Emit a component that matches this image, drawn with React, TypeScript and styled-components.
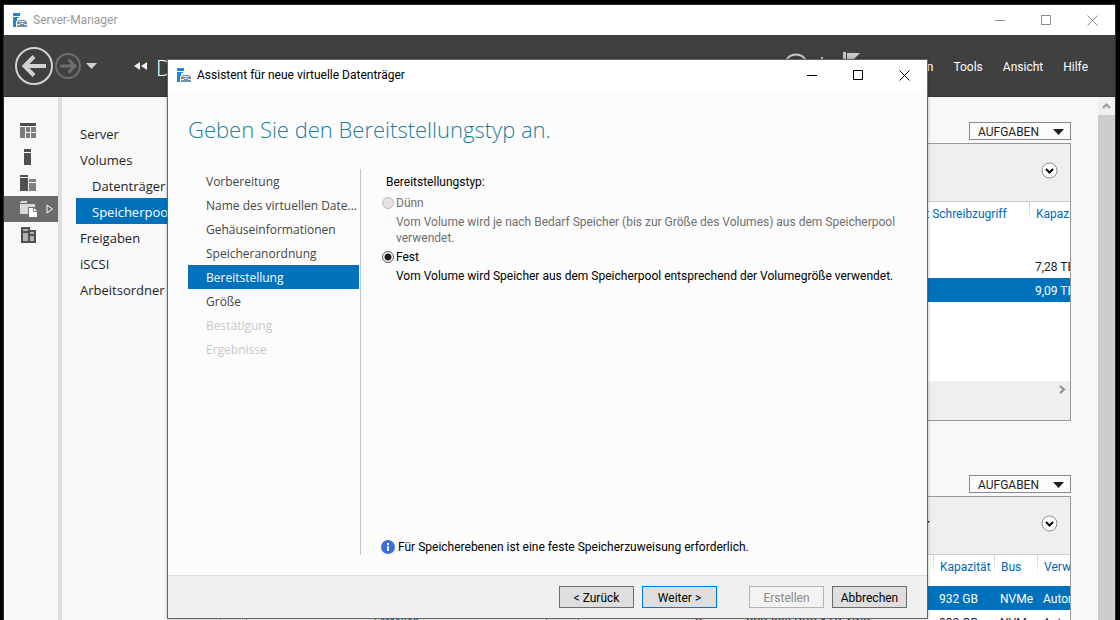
import React from "react";
import styled, { createGlobalStyle, css } from "styled-components";

const GlobalStyle = createGlobalStyle`
  *, *::before, *::after { box-sizing: border-box; }
  body {
    margin: 0;
    background: #000;
    color: #1e1e1e;
    font-family: Roboto, "Liberation Sans", sans-serif;
    font-size: 12px;
    line-height: 16px;
  }
  button { font: inherit; color: inherit; padding: 0; margin: 0; border: 0; background: none; }
  h1, h2, p, ul { margin: 0; padding: 0; font-weight: 400; }
  ul { list-style: none; }
  a { color: inherit; text-decoration: none; }
`;

const blue = "#0072bc";
const humanist = `"Open Sans", "Noto Sans", sans-serif`;

const Desktop = styled.div`
  position: relative;
  height: 100vh;
  padding: 4px 4px 0 3px;
  overflow: hidden;
`;

const MainWindow = styled.div`
  display: flex;
  flex-direction: column;
  height: 100%;
  border: 1px solid #2b2b2b;
  border-bottom: 0;
  background: #f8f8f8;
`;

const TitleBar = styled.header<{ $muted?: boolean }>`
  display: flex;
  flex: none;
  align-items: center;
  gap: 5px;
  height: 30px;
  padding-left: 9px;
  background: #fff;
  color: ${(p) => (p.$muted ? "#999" : "#000")};
`;

const WindowTitle = styled.span`
  flex: 1;
  white-space: nowrap;
`;

const CaptionButtons = styled.div`
  display: flex;
`;

const CaptionButton = styled.button`
  display: grid;
  place-items: center;
  width: 46px;
  height: 28px;
`;

const HeaderBar = styled.div`
  display: flex;
  flex: none;
  align-items: center;
  height: 62px;
  padding: 0 27px 0 10px;
  background: #404040;
  color: #fff;
  border-bottom: 1px solid #333;
`;

const HeaderButton = styled.button`
  display: grid;
  place-items: center;
`;

const Crumbs = styled.div`
  display: flex;
  flex: 1;
  align-items: center;
  gap: 12px;
  margin-left: 8px;
  padding-top: 2px;
  font-family: ${humanist};
  font-size: 22px;
  font-weight: 300;
  line-height: 32px;
  white-space: nowrap;
`;

const HeaderTools = styled.div`
  display: flex;
  align-items: center;
  gap: 12px;
  margin-right: 13px;
`;

const MenuBar = styled.nav`
  display: flex;
  gap: 20px;
  padding-top: 2px;
`;

const Body = styled.div`
  display: flex;
  flex: 1;
  min-height: 0;
`;

const Rail = styled.nav`
  flex: none;
  width: 58px;
  padding-top: 21px;
  border-right: 4px solid #dfdfdf;
`;

const RailButton = styled.button<{ $active?: boolean }>`
  display: flex;
  align-items: center;
  gap: 9px;
  width: 100%;
  height: 26px;
  padding-left: 16px;
  background: ${(p) => (p.$active ? "#6b6b6b" : "transparent")};
`;

const SideNav = styled.nav`
  flex: none;
  width: 159px;
  padding: 23px 0 0 14px;
  border-right: 1px solid #d5d5d5;
  font-family: ${humanist};
`;

const SideLink = styled.a<{ $sub?: boolean; $active?: boolean }>`
  display: block;
  height: 26px;
  padding-left: ${(p) => (p.$sub ? "16px" : "4px")};
  font-size: 13px;
  line-height: 28px;
  white-space: nowrap;
  ${(p) => p.$active && css`background: ${blue}; color: #fff;`}
`;

const Content = styled.main`
  flex: 1;
  min-width: 0;
  padding: 25px 27px 0 25px;
  overflow: hidden;
`;

const PanelHead = styled.div`
  display: flex;
  justify-content: flex-end;
  margin-bottom: 3px;
`;

const TasksButton = styled.button`
  display: flex;
  align-items: center;
  justify-content: space-between;
  width: 102px;
  height: 18px;
  padding: 1px 6px 0 8px;
  border: 1px solid #8a8a8a;
  background: #fbfbfb;
`;

const Panel = styled.section`
  border: 1px solid #999;
  background: #fff;
  overflow: hidden;
`;

const PanelTools = styled.div`
  display: flex;
  align-items: center;
  justify-content: flex-end;
  gap: 111px;
  height: 58px;
  padding: 0 12px 4px 0;
  border-bottom: 1px solid #ccc;
  background: #efefef;
`;

const PanelFoot = styled.div`
  display: flex;
  justify-content: flex-end;
  height: 39px;
  padding: 4px 4px 0 0;
  background: #efefef;
`;

const TableArea = styled.div<{ $tall?: boolean }>`
  min-height: ${(p) => (p.$tall ? "179px" : "120px")};
`;

const DataTable = styled.table`
  width: 100%;
  table-layout: fixed;
  border-collapse: collapse;
`;

const HeadCell = styled.th<{ $width?: number }>`
  width: ${(p) => (p.$width ? `${p.$width}px` : "auto")};
  height: 24px;
  padding: 0 0 0 7px;
  overflow: hidden;
  color: #0067b8;
  font-weight: 400;
  text-align: left;
  white-space: nowrap;
  background: linear-gradient(#ccc, #fff) left top / 1px 20px no-repeat;
`;

const Row = styled.tr<{ $active?: boolean }>`
  height: 24px;
  background: ${(p) => (p.$active ? blue : "transparent")};
  color: ${(p) => (p.$active ? "#fff" : "#1e1e1e")};
`;

const Cell = styled.td`
  padding: 2px 0 0 6px;
  overflow: hidden;
  white-space: nowrap;
`;

const Spacer = styled.tbody<{ $height: number }>`
  &::before {
    content: "";
    display: block;
    height: ${(p) => p.$height}px;
  }
`;

const LowerPanels = styled.div`
  display: grid;
  grid-template-columns: 301px 1fr;
  gap: 31px;
  margin-top: 54px;
`;

const EmptyNote = styled.div`
  display: flex;
  flex-direction: column;
  align-items: center;
  padding-top: 59px;
  color: #1a7a94;
`;

const ScrollBar = styled.div`
  flex: none;
  width: 17px;
  background: #cdcdcd;
`;

const ScrollUp = styled.button`
  display: grid;
  place-items: center;
  width: 17px;
  height: 18px;
  background: #f0f0f0;
`;

const Dialog = styled.section`
  position: absolute;
  top: 59px;
  right: 192px;
  bottom: 1px;
  left: 167px;
  display: flex;
  flex-direction: column;
  border: 1px solid #666;
  background: #fcfcfc;
  color: #000;
  box-shadow: 0 0 3px rgba(0, 0, 0, 0.3);
`;

const DialogTitle = styled.h1`
  padding: 23px 20px 0;
  color: #1f7c9e;
  font-family: ${humanist};
  font-size: 22px;
  font-weight: 300;
  line-height: 32px;
  white-space: nowrap;
`;

const DialogBody = styled.div`
  display: flex;
  flex: 1;
  min-height: 0;
  padding: 24px 20px 20px;
`;

const Steps = styled.ul`
  flex: none;
  width: 173px;
  padding-right: 1px;
  border-right: 1px solid #c4c4c4;
  font-family: ${humanist};
`;

const StepButton = styled.button<{ $active?: boolean }>`
  display: block;
  width: 100%;
  height: 24px;
  padding: 1px 0 0 18px;
  background: ${(p) => (p.$active ? blue : "transparent")};
  color: ${(p) => (p.$active ? "#fff" : "#444")};
  text-align: left;
  white-space: nowrap;
  &:disabled { color: #c8c8c8; }
`;

const Page = styled.div`
  display: flex;
  flex: 1;
  flex-direction: column;
  justify-content: space-between;
  padding: 5px 0 0 20px;
`;

const Choices = styled.fieldset`
  margin: 0;
  padding: 0;
  border: 0;
`;

const Legend = styled.legend`
  padding: 0 0 0 5px;
`;

const Choice = styled.label<{ $disabled?: boolean }>`
  display: grid;
  grid-template-columns: 12px 1fr;
  column-gap: 2px;
  row-gap: 3px;
  align-items: center;
  padding: 5px 0 0 1px;
  color: ${(p) => (p.$disabled ? "#6f6f6f" : "#000")};
  & + & { padding-top: 3px; }
`;

const Radio = styled.input`
  appearance: none;
  width: 12px;
  height: 12px;
  margin: 0;
  border: 1px solid #555;
  border-radius: 50%;
  background: #fff;
  &:checked { background: radial-gradient(circle, #1e1e1e 3px, #fff 4px); }
  &:disabled { border-color: #bcbcbc; background: #e4e4e4; }
`;

const Detail = styled.span`
  grid-column: 2;
  white-space: nowrap;
`;

const Note = styled.p`
  display: flex;
  align-items: center;
  gap: 3px;
`;

const DialogFoot = styled.footer`
  display: flex;
  flex: none;
  justify-content: flex-end;
  gap: 8px;
  padding: 10px 20px;
  border-top: 1px solid #dcdcdc;
  background: #f0f0f0;
`;

const PushButton = styled.button<{ $primary?: boolean; $apart?: boolean }>`
  width: 75px;
  height: 22px;
  margin-left: ${(p) => (p.$apart ? "24px" : "0")};
  padding-top: 1px;
  border: 1px solid ${(p) => (p.$primary ? "#0078d7" : "#6c6c6c")};
  background: #dedede;
  color: #000;
  &:disabled { border-color: #b4b4b4; background: #f3f3f3; color: #8a8a8a; }
`;

const AppIcon = () => (
  <svg width="15" height="15" viewBox="0 0 15 15" aria-hidden="true">
    <path d="M0 0h7v3H0zM0 4h6v1H4v3H3v6H0z" fill="#1e88dc" />
    <path d="M4 9l2-2h6l2 2v5H4z" fill="#7590a8" />
    <path d="M6 8.500h6M4 11.500h3M11 11.500h3M7.500 10.500h3" stroke="#e8eef4" fill="none" />
  </svg>
);

const Caption = ({ color }: { color: string }) => (
  <CaptionButtons>
    <CaptionButton aria-label="Minimieren">
      <svg width="11" height="11"><path d="M0 5.500h10" stroke={color} /></svg>
    </CaptionButton>
    <CaptionButton aria-label="Maximieren">
      <svg width="11" height="11"><path d="M.5.5h9v9h-9z" stroke={color} fill="none" /></svg>
    </CaptionButton>
    <CaptionButton aria-label="Schließen">
      <svg width="11" height="11"><path d="M.5.5l10 10M10.500.5l-10 10" stroke={color} fill="none" /></svg>
    </CaptionButton>
  </CaptionButtons>
);

const Caret = ({ color = "#1e1e1e" }: { color?: string }) => (
  <svg width="11" height="6" aria-hidden="true"><path d="M0 0h11L5.500 6z" fill={color} /></svg>
);

const Expand = () => (
  <HeaderButton aria-label="Erweitern">
    <svg width="17" height="17">
      <circle cx="8.500" cy="8.500" r="7.500" fill="#fff" stroke="#8a8a8a" />
      <path d="M5 7l3.500 3.500L12 7" fill="none" stroke="#000" strokeWidth="2" />
    </svg>
  </HeaderButton>
);

const Tasks = () => (
  <PanelHead>
    <TasksButton>AUFGABEN<Caret /></TasksButton>
  </PanelHead>
);

const DashboardIcon = () => (
  <svg width="17" height="16">
    <path d="M0 0h16v3H0z" fill="#4d4d4d" />
    <path d="M0 4h5v11H0zM6 4h4v5H6zM11 4h5v5h-5zM6 10h4v5H6zM11 10h5v5h-5z" fill="#7c7c7c" />
  </svg>
);
const ServerIcon = () => (
  <svg width="17" height="16"><path d="M4 0h7v3H4zM4 4h7v12H4z" fill="#505050" /></svg>
);
const ServersIcon = () => (
  <svg width="17" height="16">
    <path d="M0 0h8v2H0zM0 3h8v13H0z" fill="#505050" />
    <path d="M9 4h7v3H9zM9 8h7v8H9z" fill="#808080" />
  </svg>
);
const StorageIcon = () => (
  <svg width="17" height="16">
    <path d="M0 1h1V0h6v2H0zM0 3h15v3H8v7H0z" fill="#d8d8d8" />
    <path d="M9 7h5l3 3v6H9z" fill="#fff" />
    <path d="M13.500 7v3.500H17" fill="none" stroke="#777" />
  </svg>
);
const FilesIcon = () => (
  <svg width="17" height="16">
    <path d="M1 0h9v3h6v13H1z" fill="#505050" />
    <path d="M3 2h5v2H3zM3 6h5v8H3zM10 5h4v2h-4zM10 9h4v5h-4z" fill="#b0b0b0" />
  </svg>
);

const railItems = [
  { label: "Dashboard", icon: <DashboardIcon /> },
  { label: "Lokaler Server", icon: <ServerIcon /> },
  { label: "Alle Server", icon: <ServersIcon /> },
  { label: "Datei-/Speicherdienste", icon: <StorageIcon />, active: true },
  { label: "Dateidienste", icon: <FilesIcon /> },
];

const navItems = [
  { label: "Server" },
  { label: "Volumes" },
  { label: "Datenträger", sub: true },
  { label: "Speicherpools", sub: true, active: true },
  { label: "Freigaben" },
  { label: "iSCSI" },
  { label: "Arbeitsordner" },
];

const steps = [
  { label: "Vorbereitung" },
  { label: "Name des virtuellen Date..." },
  { label: "Gehäuseinformationen" },
  { label: "Speicheranordnung" },
  { label: "Bereitstellung", active: true },
  { label: "Größe" },
  { label: "Bestätigung", disabled: true },
  { label: "Ergebnisse", disabled: true },
];

const CrumbArrow = () => (
  <svg width="7" height="10" aria-hidden="true"><path d="M0 0l6 5-6 5z" fill="#fff" /></svg>
);

export default function App() {
  return (
    <Desktop>
      <GlobalStyle />
      <MainWindow>
        <TitleBar $muted>
          <AppIcon />
          <WindowTitle>Server-Manager</WindowTitle>
          <Caption color="#8c8c8c" />
        </TitleBar>
        <HeaderBar>
          <HeaderButton aria-label="Zurück">
            <svg width="40" height="40">
              <circle cx="20" cy="20" r="18" fill="none" stroke="#d2d2d2" strokeWidth="2" />
              <path d="M32 20H11M20 10.500L10.500 20l9.500 9.500" fill="none" stroke="#d2d2d2" strokeWidth="4" />
            </svg>
          </HeaderButton>
          <HeaderButton aria-label="Vorwärts" disabled>
            <svg width="28" height="28">
              <circle cx="14" cy="14" r="12" fill="none" stroke="#6e6e6e" strokeWidth="2" />
              <path d="M6 14h14M14.500 7.500L21 14l-6.500 6.500" fill="none" stroke="#6e6e6e" strokeWidth="3" />
            </svg>
          </HeaderButton>
          <HeaderButton aria-label="Verlauf">
            <svg width="20" height="6"><path d="M4 0h11L9.500 6z" fill="#d2d2d2" /></svg>
          </HeaderButton>
          <HeaderButton aria-label="Übergeordnet">
            <svg width="46" height="8"><path d="M38 0v8l-6-4zM45 0v8l-6-4z" fill="#f0f0f0" /></svg>
          </HeaderButton>
          <Crumbs>
            <span>Datei-/Speicherdienste</span>
            <CrumbArrow />
            <span>Volumes</span>
            <CrumbArrow />
            <span>Speicherpools</span>
          </Crumbs>
          <HeaderTools>
            <HeaderButton aria-label="Aktualisieren">
              <svg width="26" height="26">
                <circle cx="13" cy="13" r="11.500" fill="none" stroke="#c8c8c8" strokeWidth="2" />
                <path d="M8 13a5 5 0 0 1 9-3M18 13a5 5 0 0 1-9 3" fill="none" stroke="#c8c8c8" strokeWidth="2" />
              </svg>
            </HeaderButton>
            <svg width="2" height="18" aria-hidden="true"><path d="M0 0h2v18H0z" fill="#c8c8c8" /></svg>
            <HeaderButton aria-label="Benachrichtigungen">
              <svg width="32" height="28">
                <path d="M8 0h3v28H8zM12 1h13l-6 6 6 6H12z" fill="#c8c8c8" />
              </svg>
            </HeaderButton>
          </HeaderTools>
          <MenuBar>
            <a href="#verwalten">Verwalten</a>
            <a href="#tools">Tools</a>
            <a href="#ansicht">Ansicht</a>
            <a href="#hilfe">Hilfe</a>
          </MenuBar>
        </HeaderBar>
        <Body>
          <Rail>
            {railItems.map((item) => (
              <RailButton key={item.label} aria-label={item.label} $active={item.active}>
                {item.icon}
                {item.active && (
                  <svg width="8" height="10"><path d="M1 1v8l5.500-4z" fill="none" stroke="#fff" /></svg>
                )}
              </RailButton>
            ))}
          </Rail>
          <SideNav>
            {navItems.map((item) => (
              <SideLink key={item.label} href="#" $sub={item.sub} $active={item.active}>
                {item.label}
              </SideLink>
            ))}
          </SideNav>
          <Content>
            <Tasks />
            <Panel>
              <PanelTools><Expand /></PanelTools>
              <TableArea $tall>
                <DataTable>
                  <thead>
                    <tr>
                      <HeadCell />
                      <HeadCell $width={161}>Server mit Schreibzugriff</HeadCell>
                      <HeadCell $width={41}>Kapazität</HeadCell>
                    </tr>
                  </thead>
                  <Spacer $height={28} />
                  <tbody>
                    <Row><Cell /><Cell /><Cell>7,28 TB</Cell></Row>
                    <Row $active><Cell /><Cell /><Cell>9,09 TB</Cell></Row>
                  </tbody>
                </DataTable>
              </TableArea>
              <PanelFoot>
                <svg width="7" height="9"><path d="M1 1l4 3.500L1 8" fill="none" stroke="#8c8c8c" strokeWidth="2" /></svg>
              </PanelFoot>
            </Panel>
            <LowerPanels>
              <div>
                <Tasks />
                <Panel>
                  <PanelTools />
                  <EmptyNote><a href="#erstellen">Erstellen</a></EmptyNote>
                </Panel>
              </div>
              <div>
                <Tasks />
                <Panel>
                  <PanelTools><Caret /><Expand /></PanelTools>
                  <TableArea>
                    <DataTable>
                      <thead>
                        <tr>
                          <HeadCell $width={110} />
                          <HeadCell $width={51} />
                          <HeadCell />
                          <HeadCell $width={61}>Kapazität</HeadCell>
                          <HeadCell $width={43}>Bus</HeadCell>
                          <HeadCell $width={33}>Verwendung</HeadCell>
                        </tr>
                      </thead>
                      <Spacer $height={7} />
                      <tbody>
                        <Row $active>
                          <Cell /><Cell /><Cell /><Cell>932 GB</Cell><Cell>NVMe</Cell><Cell>Automatisch</Cell>
                        </Row>
                        <Row>
                          <Cell />
                          <Cell>S</Cell>
                          <Cell>SSD 980 PRO 1TB AWS</Cell>
                          <Cell>932 GB</Cell><Cell>NVMe</Cell><Cell>Automatisch</Cell>
                        </Row>
                      </tbody>
                    </DataTable>
                  </TableArea>
                </Panel>
              </div>
            </LowerPanels>
          </Content>
          <ScrollBar>
            <ScrollUp aria-label="Nach oben">
              <svg width="9" height="6"><path d="M1 5l3.500-3.500L8 5" fill="none" stroke="#999" strokeWidth="2" /></svg>
            </ScrollUp>
          </ScrollBar>
        </Body>
      </MainWindow>

      <Dialog role="dialog" aria-label="Assistent für neue virtuelle Datenträger">
        <TitleBar>
          <AppIcon />
          <WindowTitle>Assistent für neue virtuelle Datenträger</WindowTitle>
          <Caption color="#000" />
        </TitleBar>
        <DialogTitle>Geben Sie den Bereitstellungstyp an.</DialogTitle>
        <DialogBody>
          <Steps>
            {steps.map((s) => (
              <li key={s.label}>
                <StepButton $active={s.active} disabled={s.disabled}>{s.label}</StepButton>
              </li>
            ))}
          </Steps>
          <Page>
            <Choices>
              <Legend>Bereitstellungstyp:</Legend>
              <Choice $disabled>
                <Radio type="radio" name="typ" disabled />
                <span>Dünn</span>
                <Detail>
                  Vom Volume wird je nach Bedarf Speicher (bis zur Größe des Volumes) aus dem Speicherpool
                  <br />
                  verwendet.
                </Detail>
              </Choice>
              <Choice>
                <Radio type="radio" name="typ" defaultChecked />
                <span>Fest</span>
                <Detail>
                  Vom Volume wird Speicher aus dem Speicherpool entsprechend der Volumegröße verwendet.
                </Detail>
              </Choice>
            </Choices>
            <Note>
              <svg width="14" height="14" aria-hidden="true">
                <circle cx="7" cy="7" r="7" fill="#3b6fe0" />
                <path d="M6 3h2v2H6zM6 6h2v5H6z" fill="#fff" />
              </svg>
              Für Speicherebenen ist eine feste Speicherzuweisung erforderlich.
            </Note>
          </Page>
        </DialogBody>
        <DialogFoot>
          <PushButton>&lt; Zurück</PushButton>
          <PushButton $primary>Weiter &gt;</PushButton>
          <PushButton $apart disabled>Erstellen</PushButton>
          <PushButton>Abbrechen</PushButton>
        </DialogFoot>
      </Dialog>
    </Desktop>
  );
}
